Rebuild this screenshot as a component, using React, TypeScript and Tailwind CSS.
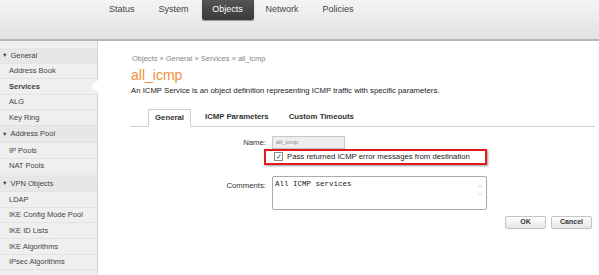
import { ChevronDown, ChevronUp } from "lucide-react";

const navItems = ["Status", "System", "Objects", "Network", "Policies"];

type SideRow = { label: string; group?: boolean; active?: boolean; tall?: boolean; spaced?: boolean };

const sideRows: SideRow[] = [
  { label: "General", group: true },
  { label: "Address Book" },
  { label: "Services", active: true },
  { label: "ALG" },
  { label: "Key Ring" },
  { label: "Address Pool", group: true, tall: true },
  { label: "IP Pools" },
  { label: "NAT Pools" },
  { label: "VPN Objects", group: true, tall: true, spaced: true },
  { label: "LDAP" },
  { label: "IKE Config Mode Pool" },
  { label: "IKE ID Lists" },
  { label: "IKE Algorithms" },
  { label: "IPsec Algorithms" },
];

const Header = () => (
  <div className="flex h-[41px] items-start border-b-2 border-[#b5b5b5] bg-gradient-to-b from-[#f4f4f4] to-[#e2e2e2] pl-[97px]">
    {navItems.map((item) =>
      item === "Objects" ? (
        <div
          key={item}
          className="ml-px flex h-[20px] w-[52px] items-center justify-center rounded-b-[2px] bg-gradient-to-b from-[#555] to-[#3a3a3a] text-[9px] text-white shadow-[0_1px_1px_#999]"
        >
          {item}
        </div>
      ) : (
        <div key={item} className="flex h-[20px] items-center px-[12px] text-[9px] text-[#444]">
          {item}
        </div>
      ),
    )}
  </div>
);

const Sidebar = () => (
  <div className="w-[98px] shrink-0 border-r border-[#d4d4d4] bg-[#efefef] pt-[7px]">
    {sideRows.map((row) => (
      <div
        key={row.label}
        className={`relative flex items-center border-b border-[#e3e3e3] text-[7.5px] text-[#444] ${
          row.group ? "bg-[#e7e7e7] pl-[2px]" : "pl-[9px]"
        } ${row.tall ? "h-[17px]" : "h-[15.6px]"} ${row.spaced ? "mt-px" : ""} ${
          row.active ? "font-bold text-[#333]" : ""
        }`}
      >
        {row.group && <span className="mr-[3px] text-[5.5px]">▼</span>}
        {row.label}
        {row.active && (
          <span className="absolute right-[-1px] top-[1px] h-0 w-0 border-y-[6px] border-r-[7px] border-y-transparent border-r-white" />
        )}
      </div>
    ))}
  </div>
);

const Tabs = () => (
  <div className="mt-[11px] flex items-end border-b border-[#d0d0d0] pl-[18px]">
    <div className="mb-[-1px] flex h-[18px] w-[43px] items-center justify-center border border-b-white border-[#ccc] bg-white text-[7.75px] font-bold text-[#333]">
      General
    </div>
    <div className="flex h-[18px] items-center pl-[14px] pr-[20px] text-[7.75px] font-bold text-[#333]">
      ICMP Parameters
    </div>
    <div className="flex h-[18px] items-center text-[7.75px] font-bold text-[#333]">
      Custom Timeouts
    </div>
  </div>
);

const Form = () => (
  <div className="mt-[9px] flex flex-col">
    <div className="flex items-center">
      <div className="w-[141px] pr-[6px] text-right text-[7.75px] text-[#333]">Name:</div>
      <div className="flex h-[13px] w-[73px] items-center border border-[#c8c8c8] bg-[#eeeeee] px-[3px] text-[6px] text-[#888]">
        all_icmp
      </div>
    </div>
    <div className="ml-[133px] flex h-[16px] w-[223px] items-center border-2 border-[#e01b1b] pl-[8px] shadow-[1px_1px_2px_#999]">
      <span className="flex h-[9px] w-[9px] items-center justify-center border border-[#888] bg-white text-[7px] leading-none text-[#333]">
        ✓
      </span>
      <span className="ml-[4px] whitespace-nowrap text-[7.75px] text-[#222]">
        Pass returned ICMP error messages from destination
      </span>
    </div>
    <div className="mt-[11px] flex items-start">
      <div className="w-[141px] pr-[6px] pt-[4px] text-right text-[7.75px] text-[#333]">Comments:</div>
      <div className="relative h-[34px] w-[215px] rounded-[2px] border border-[#aaa] bg-white px-[2px] py-[3px] font-['Liberation_Mono',monospace] text-[7.5px] leading-[9px] text-[#222]">
        All ICMP services
        <div className="absolute right-[2px] top-[5px] flex flex-col text-[#aaa]">
          <ChevronUp size={8} strokeWidth={1.5} />
          <ChevronDown size={8} strokeWidth={1.5} />
        </div>
      </div>
    </div>
    <div className="mt-[6px] flex justify-end gap-[5px] pr-[3px]">
      <button className="h-[13px] w-[41px] rounded-[2px] border border-[#c4c4c4] bg-gradient-to-b from-white to-[#e6e6e6] text-[7px] font-bold text-[#333]">
        OK
      </button>
      <button className="h-[13px] w-[41px] rounded-[2px] border border-[#c4c4c4] bg-gradient-to-b from-white to-[#e6e6e6] text-[7px] font-bold text-[#333]">
        Cancel
      </button>
    </div>
  </div>
);

export default function App() {
  return (
    <div className="h-[275px] w-[599px] overflow-hidden bg-white font-['Liberation_Sans',Arial,sans-serif]">
      <Header />
      <div className="flex h-[234px]">
        <Sidebar />
        <div className="flex-1 pl-[33px] pr-[4px] pt-[12px]">
          <div className="pl-px text-[7.5px] text-[#888]">Objects » General » Services » all_icmp</div>
          <div className="mt-[2px] text-[14px] leading-[18px] text-[#ef8f3c]">all_icmp</div>
          <div className="mt-[1px] text-[7.75px] text-[#222]">
            An ICMP Service is an object definition representing ICMP traffic with specific parameters.
          </div>
          <div className="-ml-[1px]">
            <Tabs />
          </div>
          <Form />
        </div>
      </div>
    </div>
  );
}
